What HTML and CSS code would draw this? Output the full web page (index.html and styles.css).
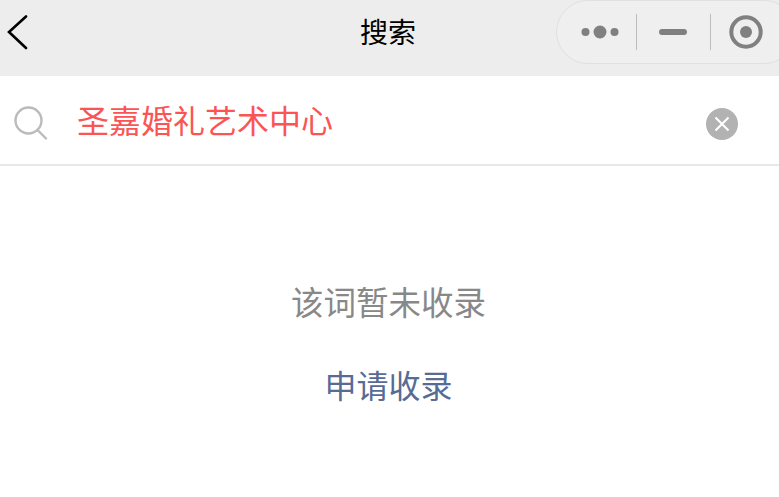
FILE: index.html
```html
<!DOCTYPE html>
<html lang="zh-CN">
<head>
<meta charset="UTF-8">
<title>搜索</title>
<link rel="stylesheet" href="styles.css">
</head>
<body>
    <!-- Nav bar -->
    <div class="navbar">
        <svg class="back" width="24" height="36" viewBox="0 0 24 36">
            <path d="M21 1.500 L4 17 L21 33" fill="none" stroke="#000" stroke-width="2.600" stroke-linecap="round" stroke-linejoin="miter"/>
        </svg>
        <div class="nav-title">搜索</div>
        <div class="capsule">
            <svg class="cap-more" width="38" height="16" viewBox="0 0 38 16">
                <circle cx="4.500" cy="8" r="4" fill="#808080"/>
                <circle cx="19" cy="8" r="6.500" fill="#808080"/>
                <circle cx="33.500" cy="8" r="4" fill="#808080"/>
            </svg>
            <span class="cap-line"></span>
            <span class="cap-minus"></span>
            <span class="cap-line"></span>
            <svg class="cap-target" width="36" height="36" viewBox="0 0 36 36">
                <circle cx="18" cy="18" r="14.700" fill="none" stroke="#808080" stroke-width="4"/>
                <circle cx="18" cy="18" r="6" fill="#808080"/>
            </svg>
        </div>
    </div>

    <!-- Search row -->
    <div class="search-row">
        <svg class="search-icon" width="34" height="34" viewBox="0 0 34 34">
            <circle cx="14.500" cy="14.500" r="13" fill="none" stroke="#bbb" stroke-width="2.400"/>
            <path d="M23.500 24 L32 32.500" stroke="#bbb" stroke-width="2.400" stroke-linecap="round"/>
        </svg>
        <div class="search-text">圣嘉婚礼艺术中心</div>
        <div class="clear-btn">
            <svg width="16" height="16" viewBox="0 0 16 16">
                <path d="M1.500 1.500 L14.500 14.500 M14.500 1.500 L1.500 14.500" stroke="#fff" stroke-width="2"/>
            </svg>
        </div>
    </div>

    <!-- Empty result -->
    <div class="empty">
        <p class="empty-msg">该词暂未收录</p>
        <a class="empty-link">申请收录</a>
    </div>
</body>
</html>
```

FILE: styles.css
```css
* {
    margin: 0;
    padding: 0;
    box-sizing: border-box;
    font-family: "Liberation Sans", "Noto Sans CJK SC", sans-serif;
}

body {
    width: 779px;
    height: 497px;
    overflow: hidden;
    background: #fff;
}

/* Nav bar */
.navbar {
    display: flex;
    align-items: center;
    height: 76px;
    background: #ededed;
    position: relative;
}

.back {
    margin-left: 5px;
    margin-top: -10px;
}

.nav-title {
    position: absolute;
    left: 0;
    right: 3px;
    top: 16px;
    text-align: center;
    font-size: 28px;
    line-height: 36px;
    color: #000;
}

.capsule {
    position: absolute;
    left: 556px;
    top: 0;
    width: 240px;
    height: 64px;
    display: flex;
    align-items: center;
    padding-left: 24px;
    background: #efefef;
    border: 1px solid #e0e0e0;
    border-radius: 32px;
}

.cap-line {
    width: 1px;
    height: 36px;
    background: #bcbcbc;
}

.cap-more {
    margin-right: 17px;
}

.cap-minus {
    width: 28px;
    height: 6px;
    margin: 0 23px 0 22px;
    border-radius: 3px;
    background: #808080;
}

.cap-target {
    margin-left: 17px;
}

/* Search row */
.search-row {
    display: flex;
    align-items: center;
    height: 90px;
    border-bottom: 2px solid #e8e8e8;
    position: relative;
}

.search-icon {
    margin-left: 14px;
    margin-top: 6px;
}

.search-text {
    margin-left: 29px;
    margin-top: 4px;
    font-size: 32px;
    line-height: 44px;
    color: #fb5454;
}

.clear-btn {
    position: absolute;
    left: 706px;
    top: 32px;
    width: 32px;
    height: 32px;
    display: flex;
    align-items: center;
    justify-content: center;
    border-radius: 50%;
    background: #b2b2b2;
}

/* Empty result */
.empty {
    display: flex;
    flex-direction: column;
    align-items: center;
    padding-top: 116px;
    padding-right: 2px;
}

.empty-msg {
    font-size: 32.500px;
    line-height: 44px;
    color: #888;
}

.empty-link {
    margin-top: 39px;
    font-size: 32px;
    line-height: 44px;
    color: #576b95;
}
```
